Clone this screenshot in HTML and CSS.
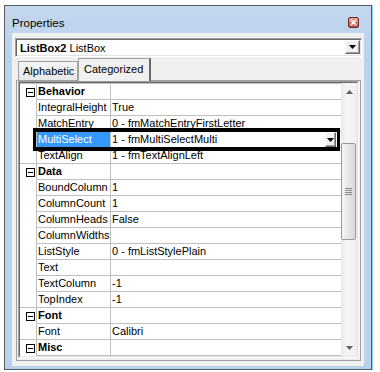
FILE: index.html
```html
<!doctype html>
<html lang="en">
    <head>
        <meta charset="UTF-8" />
        <title>Properties</title>
        <link rel="stylesheet" href="styles.css">
    </head>
    <body>
        <div class="window">
            <div class="titlebar">
                <span class="title">Properties</span>
                <span class="close">
                    <svg width="9" height="9" viewBox="0 0 9 9">
                        <path d="M2 2l5 5M7 2l-5 5" stroke="#fff" stroke-width="1.6" />
                    </svg>
                </span>
            </div>
            <div class="client">
                <div class="combo">
                    <span class="combo-text"><b>ListBox2</b> ListBox</span>
                    <span class="btn combo-btn">
                        <svg width="7" height="4" viewBox="0 0 7 4"><path d="M0 0h7l-3.5 4z" fill="#000" /></svg>
                    </span>
                </div>

                <div class="tabs">
                    <div class="tab">Alphabetic</div>
                    <div class="tab active">Categorized</div>
                </div>

                <div class="panel">
                    <div class="frame">
                        <div class="grid">
                            <div class="rows">
                                <div class="row cat">
                                    <div class="gut"><svg width="9" height="9" viewBox="0 0 9 9"><rect x=".5" y=".5" width="8" height="8" fill="#fff" stroke="#000" /><path d="M2 4.5h5" stroke="#000" /></svg></div>
                                    <div class="name">Behavior</div>
                                    <div class="val"></div>
                                </div>
                                <div class="row">
                                    <div class="gut"></div>
                                    <div class="name">IntegralHeight</div>
                                    <div class="val">True</div>
                                </div>
                                <div class="row">
                                    <div class="gut"></div>
                                    <div class="name">MatchEntry</div>
                                    <div class="val">0 - fmMatchEntryFirstLetter</div>
                                </div>
                                <div class="row sel">
                                    <div class="gut"></div>
                                    <div class="name">MultiSelect</div>
                                    <div class="val">
                                        1 - fmMultiSelectMulti
                                        <span class="btn dd">
                                            <svg width="7" height="4" viewBox="0 0 7 4"><path d="M0 0h7l-3.5 4z" fill="#000" /></svg>
                                        </span>
                                    </div>
                                </div>
                                <div class="row">
                                    <div class="gut"></div>
                                    <div class="name">TextAlign</div>
                                    <div class="val">1 - fmTextAlignLeft</div>
                                </div>
                                <div class="row cat">
                                    <div class="gut"><svg width="9" height="9" viewBox="0 0 9 9"><rect x=".5" y=".5" width="8" height="8" fill="#fff" stroke="#000" /><path d="M2 4.5h5" stroke="#000" /></svg></div>
                                    <div class="name">Data</div>
                                    <div class="val"></div>
                                </div>
                                <div class="row">
                                    <div class="gut"></div>
                                    <div class="name">BoundColumn</div>
                                    <div class="val">1</div>
                                </div>
                                <div class="row">
                                    <div class="gut"></div>
                                    <div class="name">ColumnCount</div>
                                    <div class="val">1</div>
                                </div>
                                <div class="row">
                                    <div class="gut"></div>
                                    <div class="name">ColumnHeads</div>
                                    <div class="val">False</div>
                                </div>
                                <div class="row">
                                    <div class="gut"></div>
                                    <div class="name">ColumnWidths</div>
                                    <div class="val"></div>
                                </div>
                                <div class="row">
                                    <div class="gut"></div>
                                    <div class="name">ListStyle</div>
                                    <div class="val">0 - fmListStylePlain</div>
                                </div>
                                <div class="row">
                                    <div class="gut"></div>
                                    <div class="name">Text</div>
                                    <div class="val"></div>
                                </div>
                                <div class="row">
                                    <div class="gut"></div>
                                    <div class="name">TextColumn</div>
                                    <div class="val">-1</div>
                                </div>
                                <div class="row">
                                    <div class="gut"></div>
                                    <div class="name">TopIndex</div>
                                    <div class="val">-1</div>
                                </div>
                                <div class="row cat">
                                    <div class="gut"><svg width="9" height="9" viewBox="0 0 9 9"><rect x=".5" y=".5" width="8" height="8" fill="#fff" stroke="#000" /><path d="M2 4.5h5" stroke="#000" /></svg></div>
                                    <div class="name">Font</div>
                                    <div class="val"></div>
                                </div>
                                <div class="row">
                                    <div class="gut"></div>
                                    <div class="name">Font</div>
                                    <div class="val">Calibri</div>
                                </div>
                                <div class="row cat">
                                    <div class="gut"><svg width="9" height="9" viewBox="0 0 9 9"><rect x=".5" y=".5" width="8" height="8" fill="#fff" stroke="#000" /><path d="M2 4.5h5" stroke="#000" /></svg></div>
                                    <div class="name">Misc</div>
                                    <div class="val"></div>
                                </div>
                            </div>

                            <div class="scroll">
                                <div class="sb-btn">
                                    <svg width="7" height="4" viewBox="0 0 7 4"><path d="M0 4h7l-3.5-4z" fill="#606060" /></svg>
                                </div>
                                <div class="thumb">
                                    <svg width="7" height="7" viewBox="0 0 7 7"><path d="M0 .5h7M0 2.5h7M0 4.5h7M0 6.5h7" stroke="#8a8a8a" /></svg>
                                </div>
                                <div class="sb-btn sb-down">
                                    <svg width="7" height="4" viewBox="0 0 7 4"><path d="M0 0h7l-3.5 4z" fill="#606060" /></svg>
                                </div>
                            </div>
                        </div>
                        <!-- focus frame round the edited row -->
                        <div class="focus"></div>
                    </div>
                </div>
            </div>
        </div>
    </body>
</html>
```

FILE: styles.css
```css
* {
    box-sizing: border-box;
}
body {
    margin: 0;
    background: #fff;
    font-family: "Liberation Sans", Arial, sans-serif;
    font-size: 11px;
    color: #000;
}
.window {
    width: 368px;
    height: 365px;
    margin: 5px 0 0 4px;
    padding: 0 7px 5px 7px;
    border: 1px solid #555b63;
    background: linear-gradient(#c3d7ef, #b9d1ea 60px);
    box-shadow: 1px 0 0 #92d2ef;
    display: flex;
    flex-direction: column;
}
.titlebar {
    height: 27px;
    flex-shrink: 0;
    display: flex;
    align-items: flex-start;
}
.title {
    padding-top: 10px;
    line-height: 14px;
    font-size: 11.5px;
}
.close {
    width: 11px;
    height: 11px;
    margin: 11px 5px 0 auto;
    border: 1px solid #6e2a2a;
    border-radius: 2px;
    background: linear-gradient(#e6a49c, #c4564a);
    display: flex;
    align-items: center;
    justify-content: center;
}
.close svg {
    display: block;
}

.client {
    flex: 1;
    background: #f0f0f0;
    padding-bottom: 5px;
    display: flex;
    flex-direction: column;
}

.combo {
    height: 19px;
    margin: 5px 2px 0 3px;
    border: 1px solid;
    border-color: #a0a0a0 #fff #fff #a0a0a0;
    box-shadow: inset 1px 1px #696969, inset -1px -1px #e3e3e3;
    background: #fff;
    display: flex;
    align-items: flex-start;
}
.combo-text {
    padding: 2px 0 0 4px;
    line-height: 15px;
}
.btn {
    background: #f0f0f0;
    border: 1px solid;
    border-color: #fff #696969 #696969 #fff;
    box-shadow: inset -1px -1px #a0a0a0;
    display: flex;
    align-items: center;
    justify-content: center;
}
.btn svg {
    display: block;
}
.combo-btn {
    width: 15px;
    height: 14px;
    margin: 1px 1px 0 auto;
}

.tabs {
    height: 22px;
    margin-top: 1px;
    padding-left: 6px;
    display: flex;
    align-items: flex-end;
    position: relative;
    z-index: 1;
}
.tab {
    width: 60px;
    height: 19px;
    padding: 3px 0 0 4px;
    line-height: 13px;
    border: 1px solid #a0a0a0;
    border-bottom: none;
    background: linear-gradient(#f6f6f6, #e8e8e8);
}
.tab.active {
    width: 73px;
    height: 23px;
    margin-bottom: -1px;
    padding: 4px 0 0 5px;
    border-right: 2px solid #696969;
    background: #f0f0f0;
}

.panel {
    flex: 1;
    margin: 0 3px 0 4px;
    padding: 0 1px 2px 1px;
    border: 1px solid #a0a0a0;
    display: flex;
}
.frame {
    flex: 1;
    position: relative;
    border: 1px solid;
    border-color: #a0a0a0 #fff #fff #a0a0a0;
    display: flex;
}
.grid {
    flex: 1;
    display: flex;
    overflow: hidden;
    background: #fff;
    border: 1px solid;
    border-color: #696969 #e3e3e3 #e3e3e3 #696969;
}
.rows {
    width: 321px;
    flex-shrink: 0;
    border-top: 1px solid #c0c0c0;
}
.row {
    height: 16px;
    display: flex;
    line-height: 15px;
}
.gut {
    width: 17px;
    flex-shrink: 0;
    border-right: 1px solid #c0c0c0;
}
.gut svg {
    display: block;
    margin: 4px 0 0 6px;
}
.cat .gut {
    box-shadow: 0 -1px 0 #c0c0c0;
}
.name {
    width: 74px;
    flex-shrink: 0;
    padding-left: 1px;
    white-space: nowrap;
    border-right: 1px solid #c0c0c0;
    border-bottom: 1px solid #c0c0c0;
}
.cat .name {
    font-weight: bold;
}
.val {
    flex: 1;
    padding-left: 1px;
    white-space: nowrap;
    border-bottom: 1px solid #c0c0c0;
    display: flex;
}
.sel .name {
    background: #3399ff;
    color: #fff;
}
.dd {
    width: 11px;
    height: 15px;
    margin: 0 5px 0 auto;
}

.scroll {
    flex: 1;
    background: linear-gradient(to right, #e9e9e9, #f4f4f4 30%, #f4f4f4 70%, #ececec);
    display: flex;
    flex-direction: column;
}
.sb-btn {
    height: 17px;
    display: flex;
    align-items: center;
    justify-content: center;
}
.sb-down {
    margin-top: auto;
}
.thumb {
    height: 97px;
    margin: 43px 1px 0 0;
    border: 1px solid #9a9a9a;
    border-radius: 2px;
    background: linear-gradient(to right, #f6f6f6, #e6e6e6 50%, #dadada);
    display: flex;
    align-items: center;
    justify-content: center;
}
.thumb svg {
    display: block;
}

.focus {
    position: absolute;
    left: 14px;
    top: 46px;
    width: 307px;
    height: 23px;
    border: 3px solid #000;
    border-width: 4px 3px;
}
```
